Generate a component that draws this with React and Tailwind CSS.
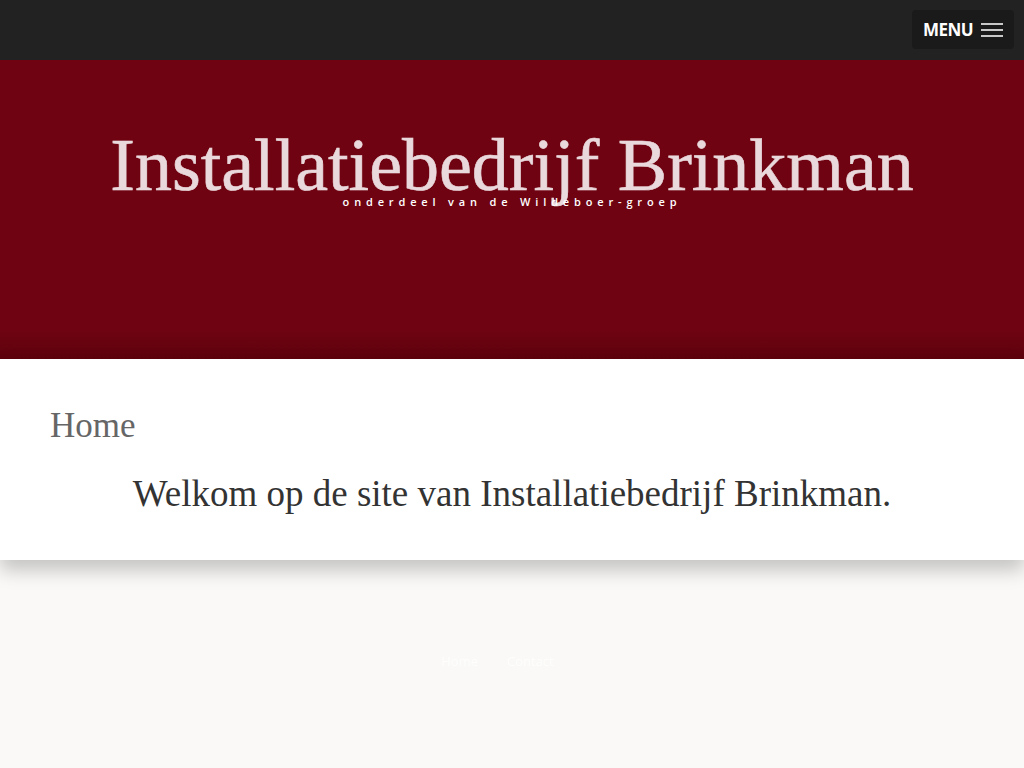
export default function App() {
  return (
    <div className="min-h-screen bg-[#faf9f7] font-['Liberation_Serif',serif]">
      {/* Top bar */}
      <header className="h-[60px] bg-[#222222] flex items-start justify-end pt-[10px] pr-[10px]">
        <button className="h-[39px] w-[102px] rounded-[4px] bg-[#1a1a1a] flex items-center justify-center gap-[8px] text-white">
          <span className="font-['Open_Sans',sans-serif] font-bold text-[17px] tracking-[-0.6px]">MENU</span>
          <svg width="22" height="16" viewBox="0 0 22 16">
            <rect x="0" y="1" width="22" height="2" fill="#c8c8c8" />
            <rect x="0" y="7" width="22" height="2" fill="#c8c8c8" />
            <rect x="0" y="13" width="22" height="2" fill="#c8c8c8" />
          </svg>
        </button>
      </header>

      {/* Hero */}
      <section className="h-[299px] bg-gradient-to-b from-[#6f0311] from-[90%] to-[#5e020d] flex flex-col items-center pt-[57px]">
        <h1 className="text-[#ead9dc] text-[74px] leading-[96px] [-webkit-text-stroke:0.6px_#ead9dc]">Installatiebedrijf Brinkman</h1>
        <p className="mt-[-19px] text-white font-['Open_Sans',sans-serif] font-semibold text-[11px] tracking-[0.44em]">
          onderdeel van de Wildeboer-groep
        </p>
      </section>

      {/* Content */}
      <main className="relative bg-white h-[201px] px-[50px] pt-[47px] shadow-[0_10px_18px_rgba(0,0,0,0.22)]">
        <h2 className="text-[#666666] text-[35px] leading-[40px]">Home</h2>
        <p className="mt-[26px] text-center text-[#333333] text-[37px] leading-[44px]">
          Welkom op de site van Installatiebedrijf Brinkman.
        </p>
      </main>

      {/* Footer */}
      <footer className="flex justify-center gap-[29px] pt-[92px] pr-[29px] font-['Open_Sans',sans-serif] text-[13px] text-[#fefefd]">
        <a href="#">Home</a>
        <a href="#">Contact</a>
      </footer>
    </div>
  );
}
